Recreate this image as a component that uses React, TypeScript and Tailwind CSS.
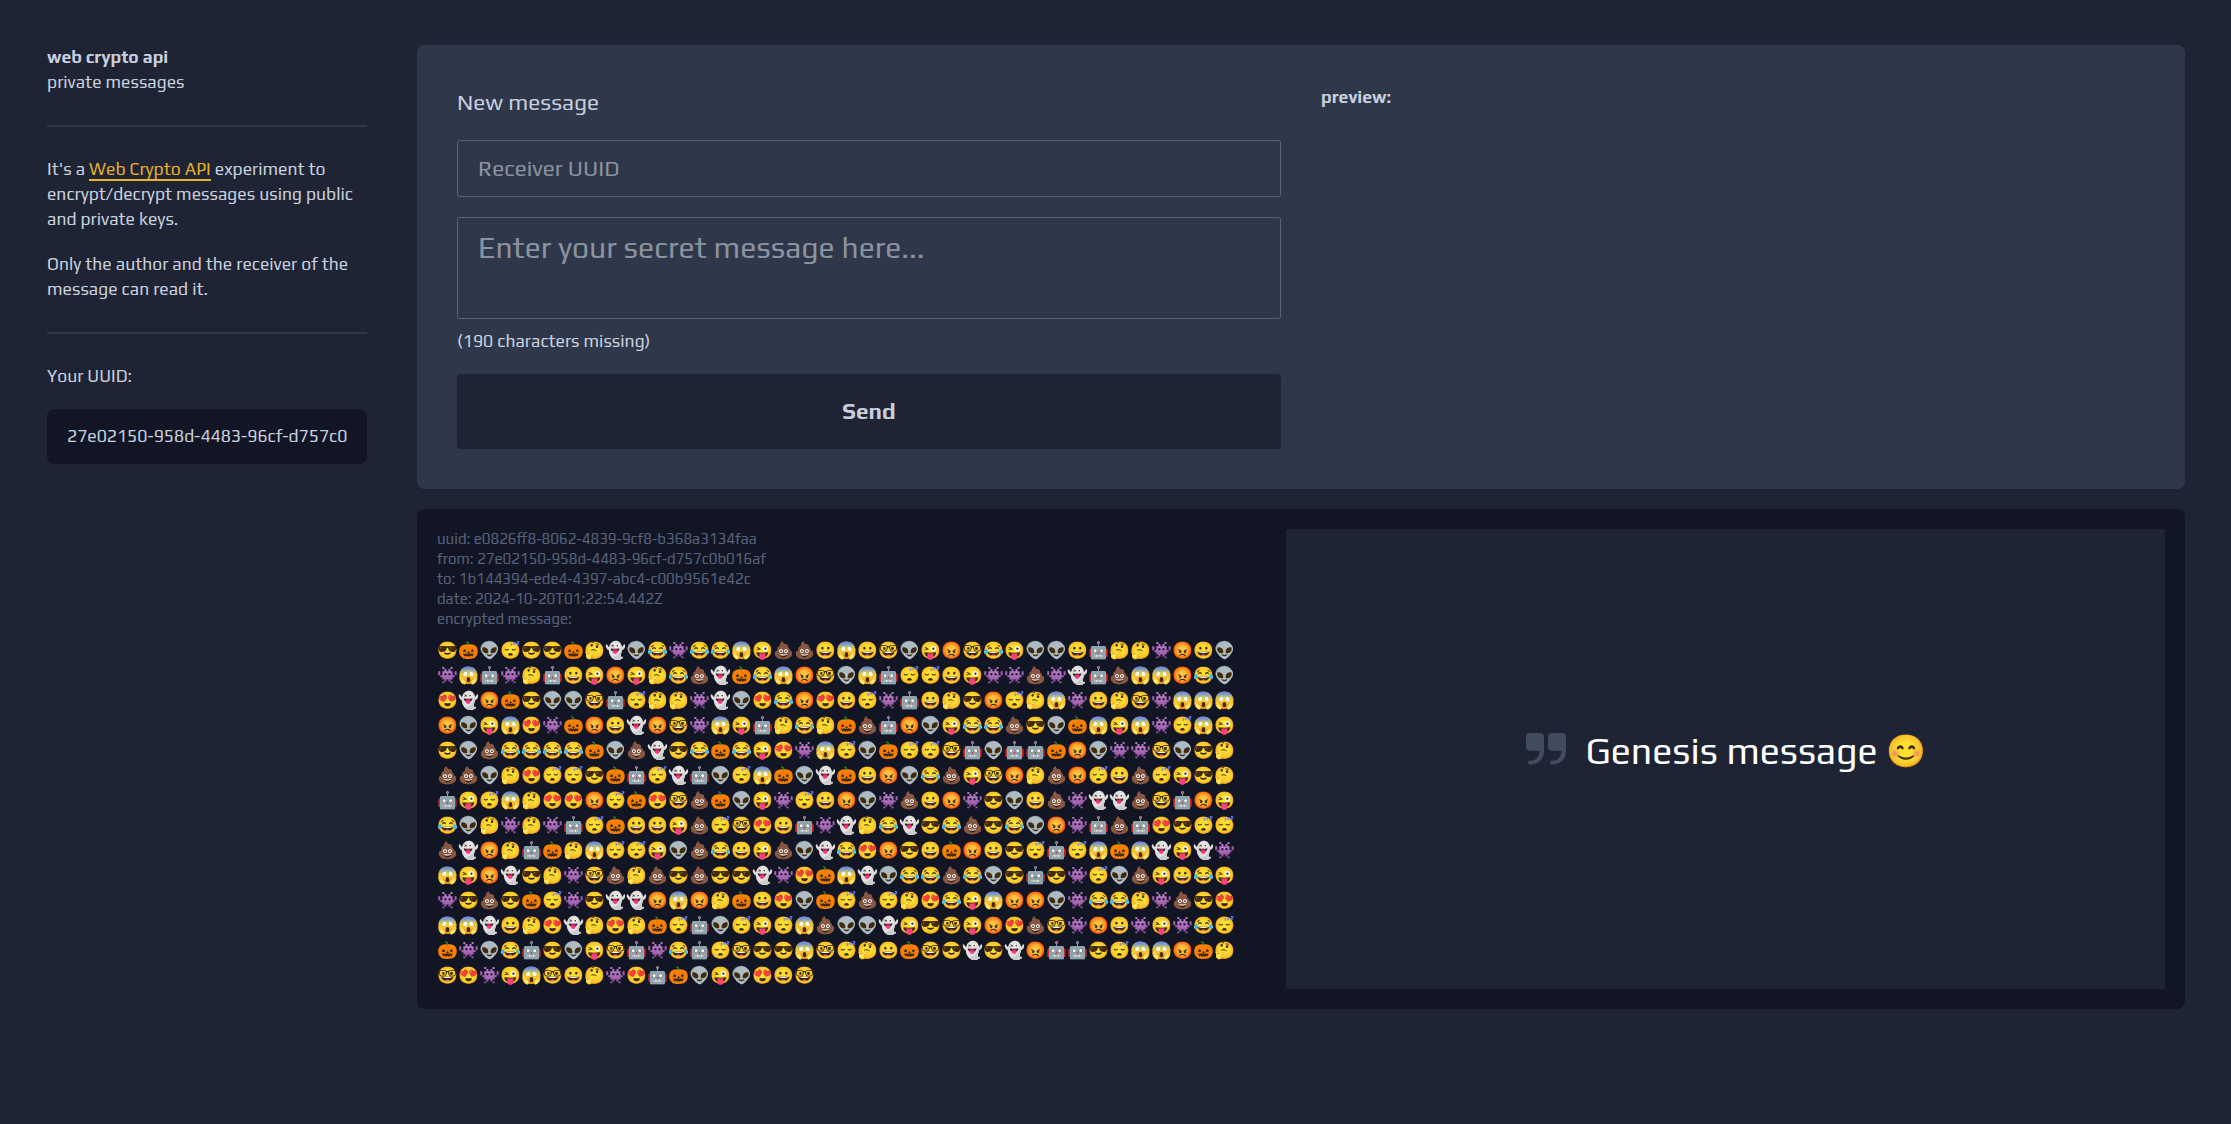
const EMOJI: Record<string, string> = {
  s: "😎", p: "🎃", a: "👽", z: "😴", t: "🤔", g: "👻", j: "😂", i: "👾",
  f: "😱", w: "😜", c: "💩", h: "😀", n: "🤓", r: "😡", b: "🤖", e: "😍",
};

const ENCRYPTED = [
  "spazsspt" + "gajijjfwcc" + "hfhnawrnjwaahbttirha",
  "ifbitbhwrwtjcgpjfr" + "nafbzzhwiicigbcffrja",
  "egrpsaanbzttigaejr" + "ehzibhtsrztfihtnifff",
  "rawfeiprhgrnifwbtj" + "tpcbrawjjcsapfwfizfw",
  "sacjjjjpacgsjpjwei" + "fzapzznbabbpraiinast",
  "ccatezzspbzgbazfpa" + "gphrajcwnrtcrzhczwst",
  "bwzfteerzpencpawiz" + "hraichrisahciggcnbrw",
  "jatitibzphhwcznehb" + "igtjgsjcsjaribcbeszz",
  "cgrtbptfzzwacjhwca" + "gjershprhszbzfpfgwgi",
  "fwrgstinctcscssgie" + "pfgajjcjasbsizacwhjw",
  "iscspzisggrfrtphea" + "pzcztejwfrraijjticse",
  "ffghtegtetpzbazwzf" + "caagwsnwrecnirhiwijz",
  "piajbsawnbijbznssf" + "nzthpnsgsgrbbszffrpt",
  "neiwfnhtiebpawaehn",
];

const META = [
  "uuid: e0826ff8-8062-4839-9cf8-b368a3134faa",
  "from: 27e02150-958d-4483-96cf-d757c0b016af",
  "to: 1b144394-ede4-4397-abc4-c00b9561e42c",
  "date: 2024-10-20T01:22:54.442Z",
  "encrypted message:",
];

function Sidebar() {
  return (
    <aside className="w-80 shrink-0">
      <h1 className="font-bold">web crypto api</h1>
      <h2>private messages</h2>
      <hr className="my-[30px] border-t-2 border-[#2d384b]" />
      <p>
        It's a{" "}
        <a href="#" className="border-b-2 border-[#ecb22a] text-[#e3ae2b]">
          Web Crypto API
        </a>{" "}
        experiment to encrypt/decrypt messages using public and private keys.
      </p>
      <p className="mt-5">Only the author and the receiver of the message can read it.</p>
      <hr className="my-[30px] border-t-2 border-[#2d384b]" />
      <p>Your UUID:</p>
      <div className="mt-5 flex h-[55px] items-center overflow-hidden rounded-[7.5px] bg-[#121624] px-5 whitespace-nowrap">
        27e02150-958d-4483-96cf-d757c0
      </div>
    </aside>
  );
}

function NewMessage() {
  return (
    <section className="grid grid-cols-2 gap-10 rounded-[7.5px] bg-[#2f374a] p-10">
      <form className="flex flex-col">
        <h3 className="text-[22.5px] leading-[35px]">New message</h3>
        <input
          placeholder="Receiver UUID"
          className="mt-5 h-[57px] rounded-[2.5px] border border-[#56657f] px-5 pb-0.5 text-[22.5px] placeholder:text-[#8b939f]"
        />
        <textarea
          placeholder="Enter your secret message here..."
          className="mt-5 h-[102px] resize-none overflow-hidden rounded-[2.5px] border border-[#56657f] px-5 py-2.5 text-[30px] leading-10 placeholder:text-[#8b939f]"
        />
        <p className="mt-2.5">(190 characters missing)</p>
        <button type="button" className="mt-5 h-[75px] rounded-[2.5px] bg-[#1e2434] text-[22.5px] font-bold">
          Send
        </button>
      </form>
      <div className="font-bold">preview:</div>
    </section>
  );
}

function QuoteIcon() {
  const mark =
    "M12 0H42A12 12 0 0 1 54 12V56A38 38 0 0 1 16 94H12A6 6 0 0 1 12 82H16A24 26 0 0 0 40 56V53H12A12 12 0 0 1 0 41V12A12 12 0 0 1 12 0Z";
  return (
    <svg viewBox="0 0 120 94" className="mr-5 h-[31.5px] w-10 fill-[#414b5e]">
      <path d={mark} />
      <path d={mark} transform="translate(66 0)" />
    </svg>
  );
}

function Message() {
  return (
    <section className="mt-5 flex rounded-[7.5px] bg-[#121624] p-5">
      <div className="w-[849px]">
        <div className="text-[15px] leading-5 text-[#56627b]">
          {META.map((line) => (
            <p key={line}>{line}</p>
          ))}
        </div>
        <div className="mt-[9px] mb-px text-[16.8px]">
          {ENCRYPTED.map((row, i) => (
            <div key={i} className="flex h-[25px] leading-[25px]">
              {row.split("").map((c, j) => (
                <span key={j} className="flex w-[21px] justify-center">
                  {EMOJI[c]}
                </span>
              ))}
            </div>
          ))}
        </div>
      </div>
      <div className="flex flex-1 items-center justify-center rounded-[2.5px] bg-[#1e2434] pb-5">
        <QuoteIcon />
        <p className="flex items-center pt-0.5 text-[37.5px] leading-[45px] whitespace-pre text-white">
          Genesis message <span className="flex w-[39px] justify-center text-[32px]">😊</span>
        </p>
      </div>
    </section>
  );
}

export default function App() {
  return (
    <div className="flex min-h-screen gap-[50px] bg-[#1e2434] pt-[45px] pr-[46px] pl-[47px] font-['Play','Roboto',sans-serif] text-[17.5px] leading-[25px] text-[#c8cfde]">
      <Sidebar />
      <main className="flex-1">
        <NewMessage />
        <Message />
      </main>
    </div>
  );
}
